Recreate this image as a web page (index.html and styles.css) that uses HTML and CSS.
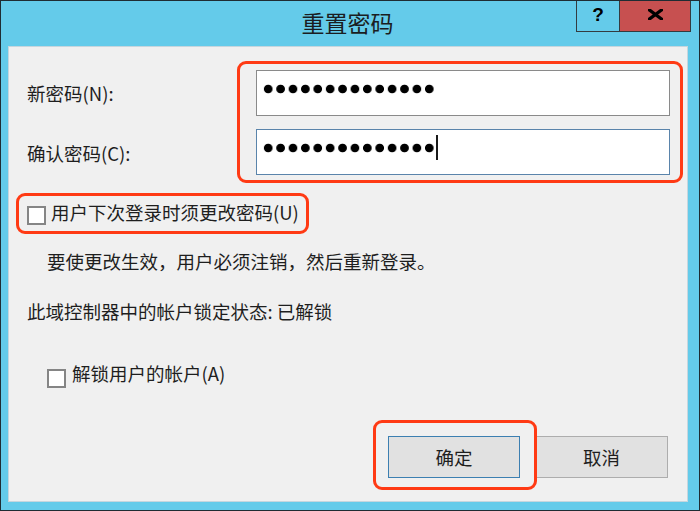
FILE: index.html
```html
<!DOCTYPE html>
<html lang="zh-CN">
<head>
<meta charset="utf-8">
<title>重置密码</title>
<link rel="stylesheet" href="styles.css">
</head>
<body>
<div class="window">
  <div class="titlebar">
    <div class="spacer"></div>
    <div class="title">重置密码</div>
    <div class="caption-btns">
      <div class="cap help">?</div>
      <div class="cap close">
        <svg width="15" height="11" viewBox="0 0 15 11"><path d="M1.5 1 L13.5 10 M13.5 1 L1.5 10" stroke="#000" stroke-width="3.2" stroke-linecap="square" fill="none"/></svg>
      </div>
    </div>
  </div>
  <div class="client">
    <div class="fields">
      <label class="lbl lbl-1">新密码(N):</label>
      <div class="inputs annot">
        <div class="pw"><div class="pw-row"><span class="dots"></span></div></div>
        <div class="pw focus"><div class="pw-row"><span class="dots"></span><span class="caret"></span></div></div>
      </div>
      <label class="lbl lbl-2">确认密码(C):</label>
    </div>

    <div class="check-row row-1 annot">
      <span class="cb"></span>
      <span class="cb-text">用户下次登录时须更改密码(U)</span>
    </div>

    <p class="note">要使更改生效，用户必须注销，然后重新登录。</p>

    <p class="status">此域控制器中的帐户锁定状态: 已解锁</p>

    <div class="check-row row-2">
      <span class="cb"></span>
      <span class="cb-text">解锁用户的帐户(A)</span>
    </div>

    <div class="buttons">
      <div class="btn ok annot">确定</div>
      <div class="btn cancel">取消</div>
    </div>
  </div>
</div>
</body>
</html>
```

FILE: styles.css
```css
* { box-sizing: border-box; }
html, body { margin: 0; padding: 0; }
body {
  width: 700px;
  height: 511px;
  font-family: "Noto Sans CJK SC", "Noto Sans", sans-serif;
  color: #1e1e1e;
  background: #63caea;
}
.window {
  width: 700px;
  height: 511px;
  border: 1px solid #1f2c33;
  background: #64cbea;
  display: flex;
  flex-direction: column;
}
.titlebar {
  height: 45px;
  display: grid;
  grid-template-columns: 1fr auto 1fr;
  align-items: start;
}
.title {
  font-size: 23px;
  line-height: 23px;
  margin-top: 10px;
  color: #1a1d22;
  padding-right: 5px;
}
.caption-btns {
  justify-self: end;
  display: flex;
  margin-right: 8px;
}
.cap {
  height: 31px;
  border-bottom: 1px solid #333b40;
  border-left: 1px solid #333b40;
  display: flex;
  align-items: center;
  justify-content: center;
}
.help {
  width: 43px;
  font-family: "Liberation Sans", Arial, sans-serif;
  font-weight: bold;
  font-size: 19px;
  color: #000;
  padding-bottom: 2px;
}
.close {
  width: 72px;
  background: #c75050;
  border-right: 1px solid #333b40;
  padding-bottom: 3px;
}
.client {
  flex: 1;
  margin: 0 11px 8px 7px;
  background: #f0f0f0;
  border: 1px solid #c6d6de;
  display: flex;
  flex-direction: column;
  padding: 0 19px 23px 0;
}
.annot { position: relative; }
.annot::after {
  content: "";
  position: absolute;
  border: 3px solid #ff3a14;
  border-radius: 9px;
  pointer-events: none;
}
.fields {
  margin-top: 23px;
  padding-left: 18px;
  display: grid;
  grid-template-columns: 229px 414px;
  grid-template-rows: 46px 46px;
  row-gap: 13px;
}
.lbl {
  font-size: 18.5px;
  line-height: 24px;
  align-self: center;
  grid-column: 1;
}
.lbl-1 { grid-row: 1; margin-top: -1px; }
.lbl-2 { grid-row: 2; margin-top: 2px; }
.inputs {
  grid-column: 2;
  grid-row: 1 / span 2;
  display: grid;
  grid-template-rows: 46px 46px;
  row-gap: 13px;
}
.inputs::after { top: -9px; right: -13px; bottom: -8px; left: -19px; }
.pw {
  background: #fff;
  border: 1px solid #8a8a8a;
  display: flex;
  align-items: center;
  padding-left: 5px;
}
.pw.focus { border-color: #5a84ab; }
.pw-row {
  display: flex;
  align-items: center;
  margin-bottom: 9px;
}
.dots {
  display: block;
  width: 173.6px;
  height: 10px;
  background-image: radial-gradient(circle, #000 0, #000 3.9px, rgba(0,0,0,0) 4.7px);
  background-size: 12.4px 10px;
  background-repeat: repeat-x;
}
.caret {
  display: block;
  width: 2px;
  height: 25px;
  background: #1a1a1a;
}
.check-row {
  display: flex;
  align-items: flex-start;
  width: fit-content;
  font-size: 18.5px;
  line-height: 24px;
}
.cb {
  width: 19px;
  height: 19px;
  background: #fff;
  border: 2px solid #858585;
  flex: none;
}
.row-1 { margin: 25px 0 0 18px; gap: 5px; }
.row-1 .cb { margin-top: 6px; }
.row-1::after { top: -7px; right: -10px; bottom: -9px; left: -11px; }
.row-2 { margin: 38px 0 0 38px; gap: 6px; }
.row-2 .cb { margin-top: 8px; }
.note {
  margin: 24px 0 0 38px;
  font-size: 18.5px;
  line-height: 24px;
}
.status {
  margin: 26px 0 0 18px;
  font-size: 18.5px;
  line-height: 24px;
}
.buttons {
  margin-top: auto;
  display: flex;
  justify-content: flex-end;
  gap: 15px;
}
.btn {
  height: 42px;
  background: #e1e1e1;
  border: 1px solid #adadad;
  display: flex;
  align-items: center;
  justify-content: center;
  font-size: 18.5px;
  line-height: 24px;
}
.ok { width: 132px; border-color: #3c7fb1; }
.ok::after { top: -17px; right: -18px; bottom: -13px; left: -16px; }
.cancel { width: 133px; }
```
